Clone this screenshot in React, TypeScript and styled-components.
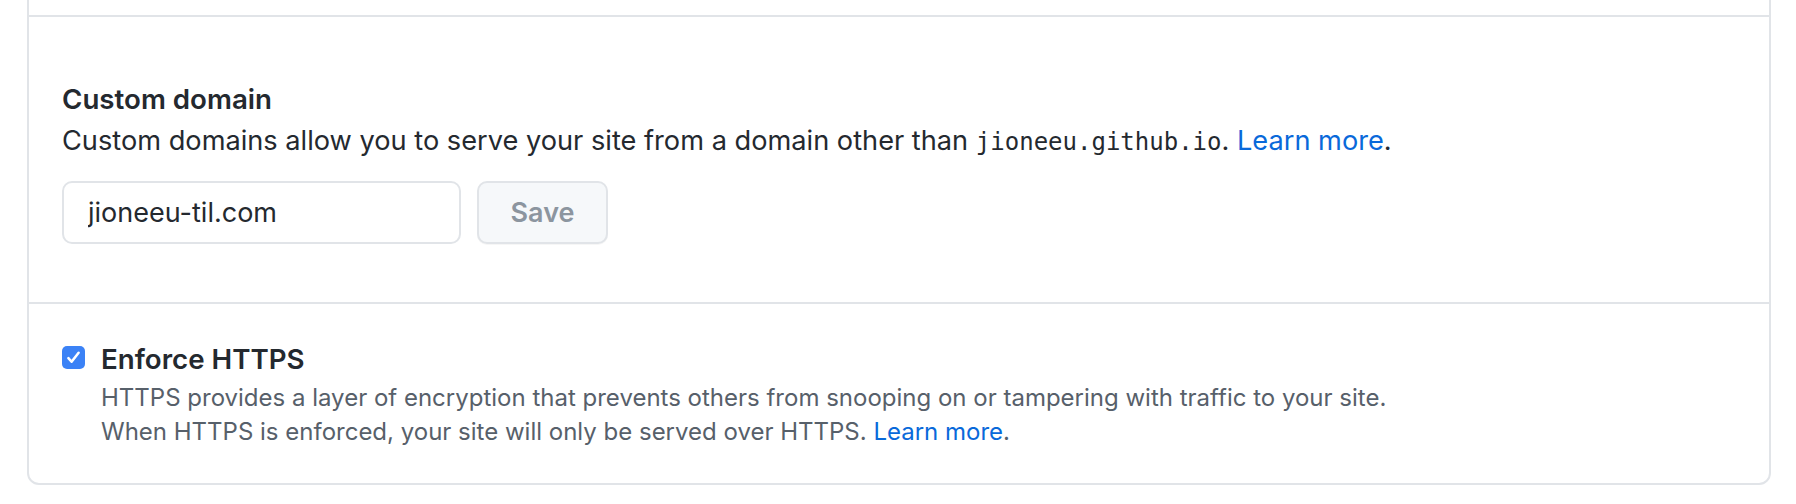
import React from "react";
import styled, { createGlobalStyle } from "styled-components";

const GlobalStyle = createGlobalStyle`
  html, body {
    margin: 0;
    padding: 0;
    background: #ffffff;
  }
  body {
    font-family: Inter, "Noto Sans", "Liberation Sans", sans-serif;
    color: #24292f;
    -webkit-font-smoothing: antialiased;
  }
`;

const Page = styled.div`
  padding: 0 25px 0 27px;
  width: 1796px;
  box-sizing: border-box;
`;

const Box = styled.div`
  margin-top: -20px;
  border: 2px solid #e1e4e8;
  border-radius: 12px;
  background: #ffffff;
`;

const Row = styled.section<{ $padTop: number; $padBottom: number; $height?: number }>`
  padding: ${(p) => p.$padTop}px 33px ${(p) => p.$padBottom}px;
  ${(p) => (p.$height ? `height: ${p.$height}px; box-sizing: border-box;` : "")}
  & + & {
    border-top: 2px solid #e1e4e8;
  }
`;

const Title = styled.h3`
  margin: 0;
  font-size: 27.7px;
  font-weight: 600;
  line-height: 34px;
  color: #24292f;
`;

const Description = styled.p`
  margin: 8px 0 0;
  font-size: 27.2px;
  line-height: 34px;
  color: #24292f;
`;

const Code = styled.code`
  font-family: "DejaVu Sans Mono", "Liberation Mono", monospace;
  font-size: 24px;
  color: #24292f;
`;

const Link = styled.a`
  color: #0969da;
  text-decoration: none;
`;

const Form = styled.div`
  display: flex;
  align-items: center;
  gap: 16px;
  margin-top: 22px;
`;

const Input = styled.input`
  box-sizing: border-box;
  width: 399px;
  height: 63px;
  padding: 0 24px;
  border: 2px solid #e1e4e8;
  border-radius: 10px;
  font-family: Inter, "Noto Sans", sans-serif;
  font-size: 27px;
  color: #24292f;
  background: #ffffff;
  outline: none;
`;

const Button = styled.button`
  box-sizing: border-box;
  width: 131px;
  height: 63px;
  border: 2px solid #e1e4e8;
  border-radius: 10px;
  background: #f6f8fa;
  color: #8c959f;
  font-family: Inter, "Noto Sans", sans-serif;
  font-size: 27px;
  font-weight: 600;
  box-shadow: 0 1px 0 rgba(27, 31, 36, 0.04);
`;

const CheckRow = styled.div`
  display: flex;
  align-items: flex-start;
  gap: 16px;
`;

const CheckBox = styled.span`
  flex: none;
  width: 23px;
  height: 23px;
  margin-top: 4px;
  border-radius: 5px;
  background: #3b82f6;
  display: flex;
  align-items: center;
  justify-content: center;
`;

const CheckText = styled.div`
  display: flex;
  flex-direction: column;
`;

const CheckTitle = styled.label`
  font-size: 27.7px;
  font-weight: 600;
  line-height: 34px;
  color: #24292f;
`;

const Note = styled.p`
  margin: 5px 0 0;
  font-size: 24px;
  line-height: 34px;
  color: #57606a;
`;

export default function App() {
  return (
    <>
      <GlobalStyle />
      <Page>
        <Box>
          <Row $padTop={0} $padBottom={0} $height={33} />
          <Row $padTop={65} $padBottom={58}>
            <Title>Custom domain</Title>
            <Description>
              Custom domains allow you to serve your site from a domain other than{" "}
              <Code>jioneeu.github.io</Code>. <Link href="#">Learn more</Link>.
            </Description>
            <Form>
              <Input defaultValue="jioneeu-til.com" />
              <Button>Save</Button>
            </Form>
          </Row>
          <Row $padTop={38} $padBottom={34}>
            <CheckRow>
              <CheckBox>
                <svg width="17" height="17" viewBox="0 0 16 16" fill="none">
                  <path d="M3.2 8.6l3 3.4L12.8 3.6" stroke="#fff" strokeWidth="2.4" strokeLinecap="round" strokeLinejoin="round" />
                </svg>
              </CheckBox>
              <CheckText>
                <CheckTitle>Enforce HTTPS</CheckTitle>
                <Note>
                  HTTPS provides a layer of encryption that prevents others from snooping on or tampering with traffic to your site.
                  <br />
                  When HTTPS is enforced, your site will only be served over HTTPS. <Link href="#">Learn more</Link>.
                </Note>
              </CheckText>
            </CheckRow>
          </Row>
        </Box>
      </Page>
    </>
  );
}
